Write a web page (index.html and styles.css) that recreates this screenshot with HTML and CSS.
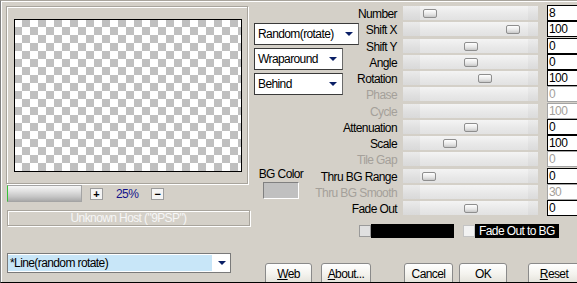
FILE: index.html
```html
<!DOCTYPE html>
<html>
	<head>
		<meta charset="UTF-8">
		<title>Tile Brush</title>
		<link rel="stylesheet" href="styles.css">
	</head>
	<body>
		<div class="window">
			<div class="left">
				<div class="frame">
					<div class="checker"></div>
				</div>
				<div class="zoom-row">
					<div class="zoom-bar"></div>
					<span class="zbtn">+</span>
					<span class="zoom-val">25%</span>
					<span class="zbtn">&minus;</span>
				</div>
				<div class="host">Unknown Host ("9PSP")</div>
				<div class="combo">
					<span class="combo-text">*Line(random rotate)</span>
					<span class="arrow"></span>
				</div>
			</div>
			<div class="right">
				<div class="top">
					<div class="mid">
						<div class="select wide">Random(rotate)<span class="arrow"></span></div>
						<div class="select">Wraparound<span class="arrow"></span></div>
						<div class="select">Behind<span class="arrow"></span></div>
						<div class="bgcolor">
							<span>BG Color</span>
							<div class="swatch"></div>
						</div>
					</div>
					<div class="params">
						<span class="lbl">Number</span>
						<div class="track"><span class="thumb" style="left:20px"></span></div>
						<span class="val">8</span>

						<span class="lbl">Shift X</span>
						<div class="track"><span class="thumb" style="left:103px"></span></div>
						<span class="val">100</span>

						<span class="lbl">Shift Y</span>
						<div class="track"><span class="thumb" style="left:61px"></span></div>
						<span class="val">0</span>

						<span class="lbl">Angle</span>
						<div class="track"><span class="thumb" style="left:61px"></span></div>
						<span class="val">0</span>

						<span class="lbl">Rotation</span>
						<div class="track"><span class="thumb" style="left:75px"></span></div>
						<span class="val">100</span>

						<span class="lbl off">Phase</span>
						<div class="track"></div>
						<span class="val off">0</span>

						<span class="lbl off">Cycle</span>
						<div class="track"></div>
						<span class="val off">100</span>

						<span class="lbl">Attenuation</span>
						<div class="track"><span class="thumb" style="left:61px"></span></div>
						<span class="val">0</span>

						<span class="lbl">Scale</span>
						<div class="track"><span class="thumb" style="left:40px"></span></div>
						<span class="val">100</span>

						<span class="lbl off">Tile Gap</span>
						<div class="track"></div>
						<span class="val off">0</span>

						<span class="lbl">Thru BG Range</span>
						<div class="track"><span class="thumb" style="left:19px"></span></div>
						<span class="val">0</span>

						<span class="lbl off">Thru BG Smooth</span>
						<div class="track"></div>
						<span class="val off">30</span>

						<span class="lbl">Fade Out</span>
						<div class="track"><span class="thumb" style="left:61px"></span></div>
						<span class="val">0</span>
					</div>
				</div>
				<div class="checks">
					<span class="cb grey"></span>
					<span class="colorbar"></span>
					<span class="cb"></span>
					<span class="fade-label">Fade Out to BG</span>
				</div>
				<div class="buttons">
					<button class="btn web"><u>W</u>eb</button>
					<button class="btn about"><u>A</u>bout...</button>
					<button class="btn cancel">Cancel</button>
					<button class="btn ok">OK</button>
					<button class="btn reset"><u>R</u>eset</button>
				</div>
			</div>
		</div>
	</body>
</html>
```

FILE: styles.css
```css
body{
	margin:0;
	background:#d4d0c8;
	font-family:"Liberation Sans", Arial, sans-serif;
	font-size:12px;
	letter-spacing:-0.6px;
	color:#000;
}
.window{
	width:577px;
	height:283px;
	box-sizing:border-box;
	border-top:1px solid #a8a49c;
	border-left:1px solid #808080;
	border-bottom:1px solid #000;
	box-shadow:inset 1px 1px 0 #fff;
	display:flex;
	overflow:hidden;
}
.left{
	width:253px;
	flex:none;
}
.frame{
	margin:5px 0 0 5px;
	width:242px;
	box-sizing:border-box;
	padding:12px 5px 11px 7px;
	border:1px solid #a8a49c;
	box-shadow:inset 1px 1px 0 #fff, 1px 1px 0 #fff;
}
.checker{
	width:228px;
	height:153px;
	box-sizing:border-box;
	border:1px solid #000;
	background-color:#fff;
	background-image:conic-gradient(#c0c0c0 25%, #fff 0 50%, #c0c0c0 0 75%, #fff 0);
	background-size:16px 16px;
	background-origin:border-box;
}
.zoom-row{
	display:flex;
	align-items:center;
	height:17px;
	margin-top:1px;
	padding-left:6px;
}
.zoom-bar{
	width:75px;
	height:17px;
	box-sizing:border-box;
	border:1px solid #a4a4a4;
	border-left-color:#38c038;
	background:linear-gradient(to bottom, #f6f6f6 0%, #e0e0e0 35%, #c6c6c6 70%, #a9a9a9 100%);
}
.zbtn{
	width:13px;
	height:12px;
	box-sizing:border-box;
	margin-left:8px;
	border:1px solid #9c9c9c;
	background:#f4f4f4;
	font-weight:bold;
	font-size:11px;
	line-height:10px;
	text-align:center;
	letter-spacing:0;
}
.zoom-val{
	margin:0 13px;
	color:#12128a;
}
.zoom-val + .zbtn{
	margin-left:0;
}
.host{
	margin:8px 0 0 6px;
	width:243px;
	height:16px;
	box-sizing:border-box;
	border:1px solid #a8a49c;
	box-shadow:1px 1px 0 #fff, inset 1px 1px 0 #fff;
	color:#f6f6f6;
	text-align:center;
	line-height:14px;
}
.combo{
	display:flex;
	align-items:center;
	margin:27px 0 0 6px;
	width:224px;
	height:20px;
	box-sizing:border-box;
	border:1px solid #7a7a7a;
	background:#fff;
}
.combo-text{
	width:204px;
	height:16px;
	line-height:16px;
	background:#c8e6f8;
	padding-left:2px;
	box-sizing:border-box;
}
.arrow{
	width:0;
	height:0;
	border-left:4px solid transparent;
	border-right:4px solid transparent;
	border-top:4px solid #0a1f66;
}
.combo .arrow{
	margin-left:6px;
}
.right{
	flex:1;
}
.top{
	display:flex;
}
.mid{
	width:60px;
	flex:none;
	padding-top:22px;
}
.select{
	display:flex;
	align-items:center;
	justify-content:space-between;
	width:89px;
	height:22px;
	box-sizing:border-box;
	margin-bottom:3px;
	padding:0 5px 0 3px;
	border:1px solid #3a3a3a;
	border-right-color:#6a6a6a;
	background:#fff;
	white-space:nowrap;
}
.select.wide{
	width:105px;
	padding-right:5px;
}
.bgcolor{
	display:flex;
	flex-direction:column;
	align-items:center;
	width:42px;
	margin:72px 0 0 6px;
	white-space:nowrap;
}
.swatch{
	width:36px;
	height:17px;
	box-sizing:border-box;
	margin-top:1px;
	border:1px solid #808080;
	border-right-color:#fff;
	border-bottom-color:#fff;
	background:#c0c0c0;
}
.params{
	display:grid;
	grid-template-columns:89px 144px 31px;
	grid-auto-rows:16.25px;
	align-items:center;
	padding-top:4px;
}
.lbl{
	text-align:right;
	padding:2px 6px 0 0;
	white-space:nowrap;
	line-height:14px;
}
.off{
	color:#a4a09a;
}
.track{
	position:relative;
	width:135px;
	height:14px;
	background:linear-gradient(to right, rgba(0,0,0,0.04) 0, rgba(0,0,0,0.04) 17px, transparent 17px, transparent 125px, rgba(0,0,0,0.03) 125px),
		linear-gradient(to bottom, #f4f4f4, #e8e8e8 60%, #e2e2e2);
}
.thumb{
	position:absolute;
	top:3px;
	width:14px;
	height:9px;
	box-sizing:border-box;
	border:1px solid #8e8e8e;
	border-radius:2px;
	background:linear-gradient(to bottom, #ffffff, #e6e6e6 60%, #c8c8c8);
}
.val{
	height:16px;
	box-sizing:border-box;
	border:1px solid #000;
	border-right:none;
	padding-left:1px;
	line-height:14px;
	background:#fff;
}
.val.off{
	border-color:#a4a4a4;
}
.checks{
	display:flex;
	align-items:center;
	height:14px;
	margin:8px 0 0 105px;
}
.cb{
	width:12px;
	height:12px;
	box-sizing:border-box;
	border:1px solid #c4c4c4;
	background:#f2f2f2;
}
.cb.grey{
	border-color:#9a9a9a;
	background:#e0e0e0;
}
.colorbar{
	width:83px;
	height:14px;
	background:#000;
	margin-right:9px;
}
.fade-label{
	width:84px;
	height:14px;
	box-sizing:border-box;
	padding-left:4px;
	line-height:14px;
	background:#000;
	color:#fff;
	white-space:nowrap;
}
.buttons{
	display:flex;
	margin-top:25px;
	padding-left:11px;
}
.btn{
	height:22px;
	box-sizing:border-box;
	padding:0;
	border:1px solid #8a8a8a;
	border-radius:3px;
	background:linear-gradient(to bottom, #ffffff, #f4f3ee 50%, #e2e0d8);
	font:inherit;
	letter-spacing:inherit;
	color:#000;
	flex:none;
}
.web{ width:47px; }
.about{ width:50px; margin-left:9px; }
.cancel{ width:49px; margin-left:33px; }
.ok{ width:48px; margin-left:6px; }
.reset{ width:52px; margin-left:21px; }
```
